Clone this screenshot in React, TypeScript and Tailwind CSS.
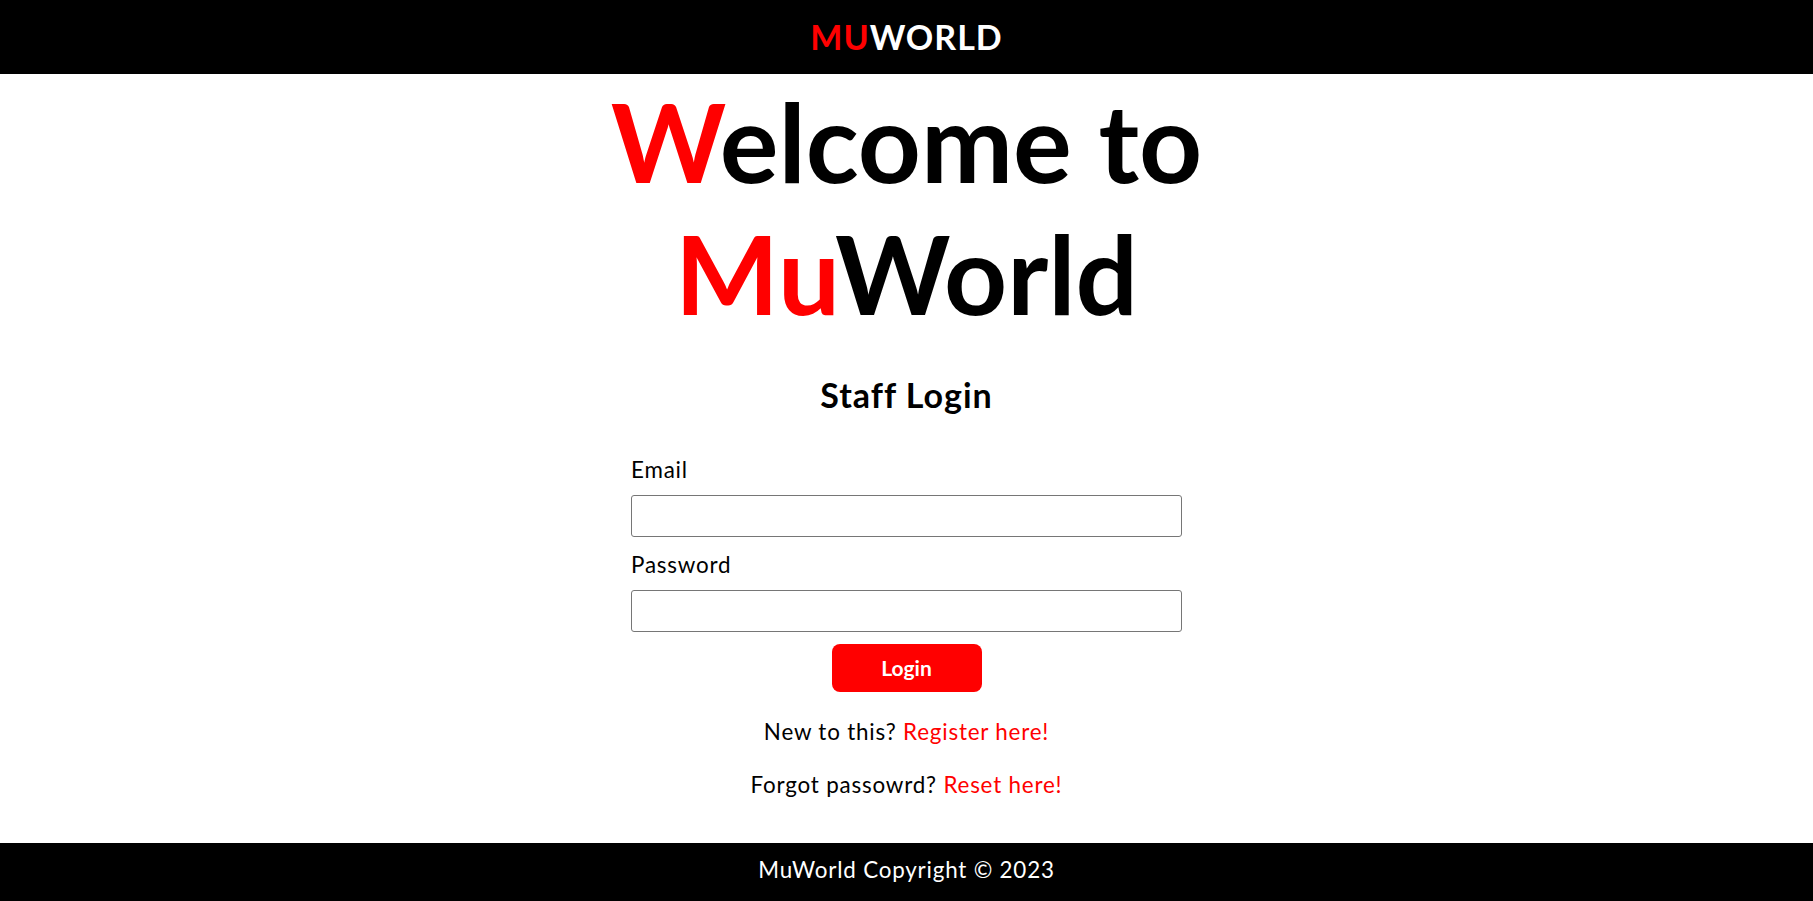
import React from "react";

function App() {
  return (
    <div className="flex min-h-screen flex-col bg-white font-['Lato',sans-serif] text-black">
      <header className="flex h-[74px] items-center justify-center bg-black">
        <span className="text-[34px] font-bold leading-none tracking-[1px]">
          <span className="text-[#ff0000]">MU</span>
          <span className="text-white">WORLD</span>
        </span>
      </header>

      <main className="flex flex-1 flex-col items-center">
        <h1 className="text-center text-[110px] font-bold leading-[1.2]">
          <span className="text-[#ff0000]">W</span>elcome to
          <br />
          <span className="text-[#ff0000]">Mu</span>World
        </h1>

        <h2 className="mt-[37px] text-[34px] font-bold leading-[1.2] tracking-[1px]">
          Staff Login
        </h2>

        <form
          className="mt-[40px] flex w-[551px] flex-col"
          onSubmit={(e) => e.preventDefault()}
        >
          <label htmlFor="email" className="text-[22.4px] leading-[27px] tracking-[0.8px]">
            Email
          </label>
          <input
            id="email"
            type="email"
            className="mt-[12px] h-[42px] rounded-[3px] border border-[#767676] px-2 text-[20px]"
          />
          <label
            htmlFor="password"
            className="mt-[14px] text-[22.4px] leading-[27px] tracking-[0.8px]"
          >
            Password
          </label>
          <input
            id="password"
            type="password"
            className="mt-[12px] h-[42px] rounded-[3px] border border-[#767676] px-2 text-[20px]"
          />
          <button
            type="submit"
            className="mt-[12px] h-[48px] w-[150px] self-center rounded-[8px] bg-[#ff0000] text-[21px] font-bold text-white"
          >
            Login
          </button>
        </form>

        <div className="mt-[26px] flex flex-col items-center gap-[26px] text-[22.4px] leading-[27px] tracking-[0.8px]">
          <p>
            New to this? <a className="text-[#ff0000]">Register here!</a>
          </p>
          <p>
            Forgot passowrd? <a className="text-[#ff0000]">Reset here!</a>
          </p>
        </div>
      </main>

      <footer className="flex h-[58px] justify-center bg-black pt-[13px] text-[22.4px] leading-[27px] tracking-[0.8px] text-white">
        MuWorld Copyright © 2023
      </footer>
    </div>
  );
}

export default App;
